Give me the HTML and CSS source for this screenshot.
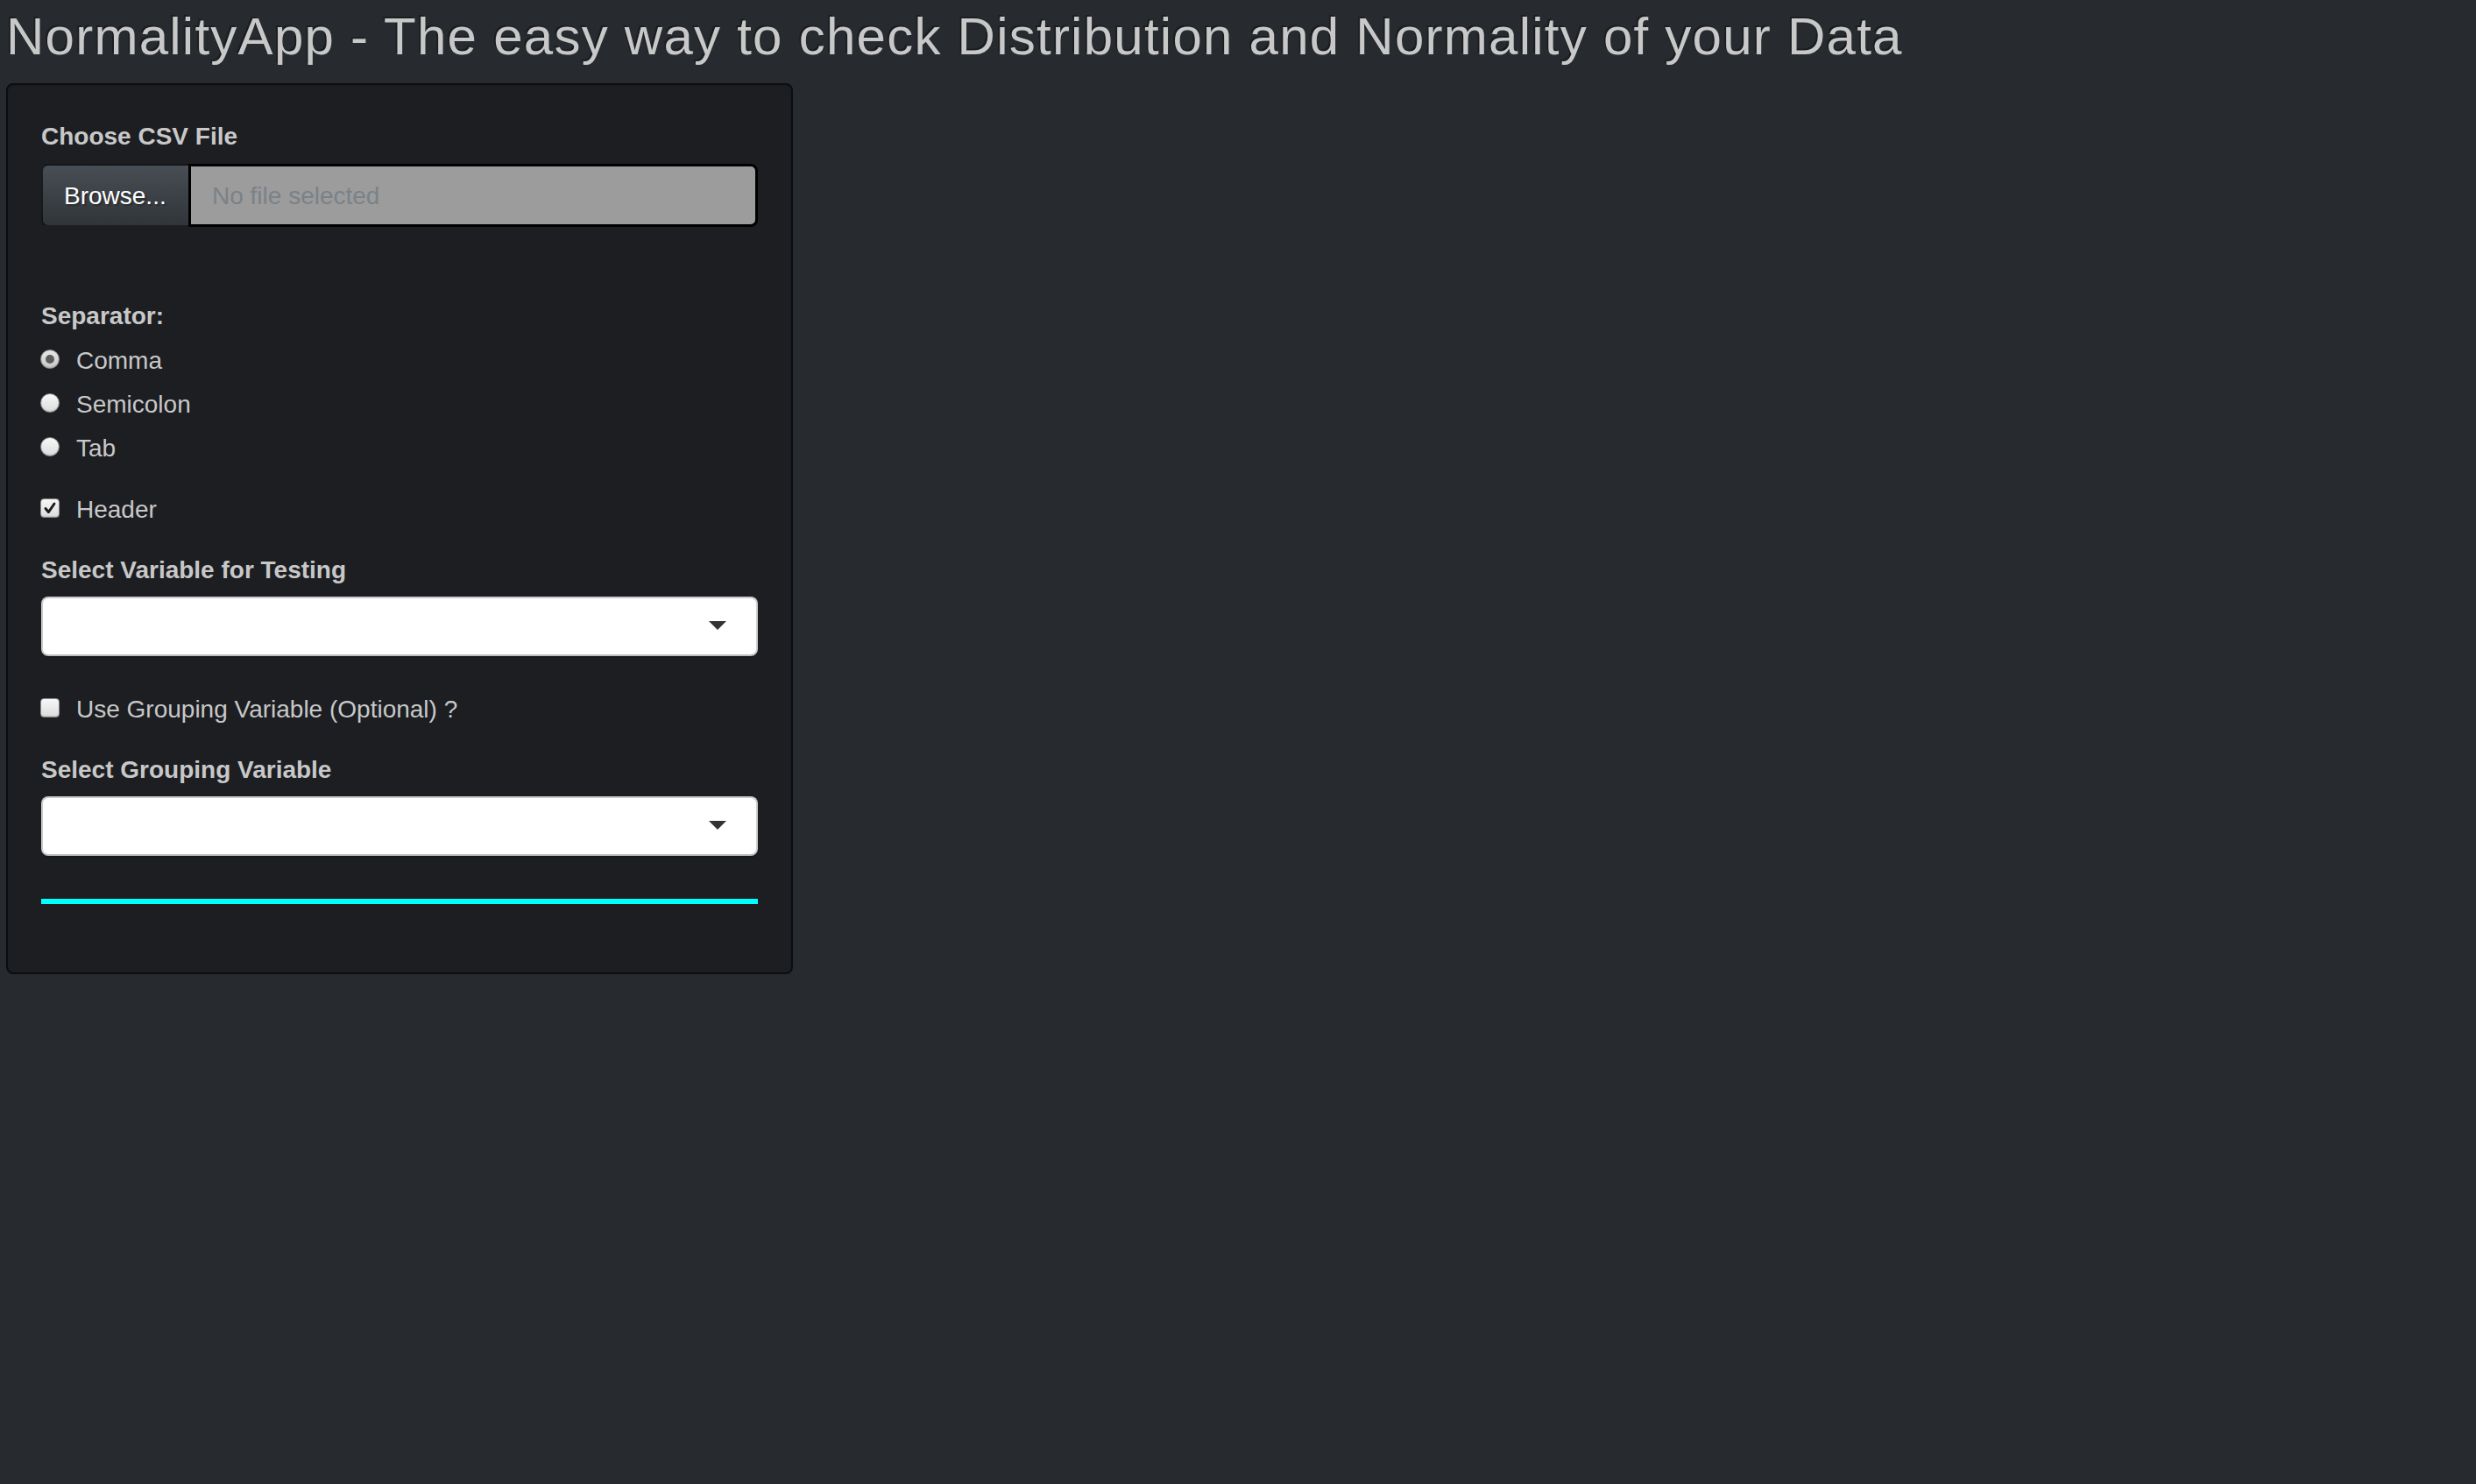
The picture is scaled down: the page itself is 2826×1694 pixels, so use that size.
FILE: index.html
```html
<!DOCTYPE html>
<html lang="en">
<head>
<meta charset="utf-8">
<title>NormalityApp</title>
<link rel="stylesheet" href="styles.css">
</head>
<body>
<div class="page">
  <h2 class="title">NormalityApp - The easy way to check Distribution and Normality of your Data</h2>
  <div class="well">
    <div class="field">
      <div class="control-label label-file">Choose CSV File</div>
      <div class="input-group">
        <span class="btn-browse">Browse...</span>
        <span class="file-text">No file selected</span>
      </div>
    </div>

    <div class="field sep-field">
      <div class="control-label label-sep">Separator:</div>
      <div class="options">
        <div class="opt"><span class="radio on"></span><span class="opt-text">Comma</span></div>
        <div class="opt"><span class="radio"></span><span class="opt-text">Semicolon</span></div>
        <div class="opt"><span class="radio"></span><span class="opt-text">Tab</span></div>
      </div>
    </div>

    <div class="opt opt-header">
      <span class="checkbox on"><svg viewBox="0 0 22 22" width="22" height="22"><path d="M5.5 11.5 L9.2 16 L16.5 5.5" fill="none" stroke="#1a1a1a" stroke-width="3.2" stroke-linecap="round" stroke-linejoin="round"/></svg></span>
      <span class="opt-text">Header</span>
    </div>

    <div class="field field-var">
      <div class="control-label label-sel">Select Variable for Testing</div>
      <div class="select"><span class="caret"></span></div>
    </div>

    <div class="opt opt-group">
      <span class="checkbox"></span>
      <span class="opt-text">Use Grouping Variable (Optional) ?</span>
    </div>

    <div class="field field-grp">
      <div class="control-label label-sel">Select Grouping Variable</div>
      <div class="select"><span class="caret"></span></div>
    </div>

    <div class="cyan-line"></div>
  </div>
</div>
</body>
</html>
```

FILE: styles.css
```css
html, body {
  margin: 0;
  padding: 0;
  background: #272b30;
}

body {
  font-family: "Liberation Sans", Arial, Helvetica, sans-serif;
  color: #c8c8c8;
  font-size: 28px;
  line-height: 40px;
  min-height: 1694px;
}

.page {
  padding: 9px 0 0 7px;
}

.title {
  margin: 0 0 20px 0;
  font-size: 60px;
  line-height: 66px;
  font-weight: 400;
  letter-spacing: 1.25px;
  color: #c8c8c8;
  text-shadow: -2px -2px 0 rgba(0, 0, 0, 0.3);
  white-space: nowrap;
}

.well {
  box-sizing: border-box;
  width: 898px;
  padding: 39px 38px 38px 38px;
  background: #1c1e22;
  border: 2px solid #0c0d0e;
  border-radius: 8px;
  box-shadow: inset 0 2px 2px rgba(0, 0, 0, 0.05);
}

.control-label {
  font-weight: 700;
  font-size: 28px;
  line-height: 40px;
  color: #c8c8c8;
  margin-bottom: 10px;
}

.label-file {
  margin-bottom: 11px;
}

.input-group {
  display: flex;
  height: 72px;
}

.btn-browse {
  box-sizing: border-box;
  width: 168px;
  flex: none;
  display: flex;
  align-items: center;
  padding-left: 24px;
  padding-top: 2px;
  color: #fff;
  font-size: 28px;
  background-image: linear-gradient(#484e55, #3a3f44 60%, #313539);
  border: 2px solid rgba(0, 0, 0, 0.6);
  border-right: none;
  border-radius: 8px 0 0 8px;
  text-shadow: 2px 2px 2px rgba(0, 0, 0, 0.3);
}

.file-text {
  box-sizing: border-box;
  flex: 1;
  display: flex;
  align-items: center;
  padding-left: 24px;
  padding-top: 2px;
  background: #9c9c9c;
  border: 3px solid #000;
  border-radius: 0 8px 8px 0;
  color: #7a8288;
  font-size: 28px;
}

.sep-field {
  margin-top: 82px;
}

.label-sep {
  margin-bottom: 9px;
}

.options {
  display: flex;
  flex-direction: column;
  gap: 10px;
}

.opt {
  display: flex;
  align-items: center;
  height: 40px;
  color: #c8c8c8;
}

.opt-text {
  margin-left: 19px;
  padding-top: 3px;
}

.radio {
  box-sizing: border-box;
  width: 22px;
  height: 22px;
  margin-left: -1px;
  flex: none;
  border-radius: 50%;
  background: linear-gradient(#f7f7f7, #dcdcdc);
  border: 1px solid #8a8a8a;
  box-shadow: inset 0 -1px 1px rgba(0, 0, 0, 0.12);
  display: flex;
  align-items: center;
  justify-content: center;
}

.radio.on {
  background: linear-gradient(#e6e6e6, #c8c8c8);
}

.radio.on::after {
  content: "";
  width: 10px;
  height: 10px;
  border-radius: 50%;
  background: #5d5d5d;
}

.checkbox {
  box-sizing: border-box;
  width: 22px;
  height: 22px;
  margin-left: -1px;
  flex: none;
  border-radius: 4px;
  background: linear-gradient(#f7f7f7, #dcdcdc);
  border: 1px solid #8a8a8a;
  box-shadow: inset 0 -1px 1px rgba(0, 0, 0, 0.12);
  display: flex;
  align-items: center;
  justify-content: center;
}

.checkbox svg {
  display: block;
}

.opt-header {
  margin-top: 30px;
}

.field-var {
  margin-top: 31px;
}

.select {
  box-sizing: border-box;
  position: relative;
  height: 68px;
  background: #fff;
  border: 2px solid #cccccc;
  border-bottom-color: #bdbdbd;
  border-radius: 8px;
  box-shadow: 0 2px 0 rgba(0, 0, 0, 0.15);
}

.caret {
  position: absolute;
  right: 34px;
  top: 50%;
  margin-top: -6px;
  width: 0;
  height: 0;
  border-style: solid;
  border-width: 10px 10px 0 10px;
  border-color: #333 transparent transparent transparent;
}

.opt-group {
  margin-top: 39px;
}

.field-grp {
  margin-top: 31px;
}

.cyan-line {
  height: 6px;
  margin-top: 49px;
  margin-bottom: 40px;
  background: #00ffff;
}
```
